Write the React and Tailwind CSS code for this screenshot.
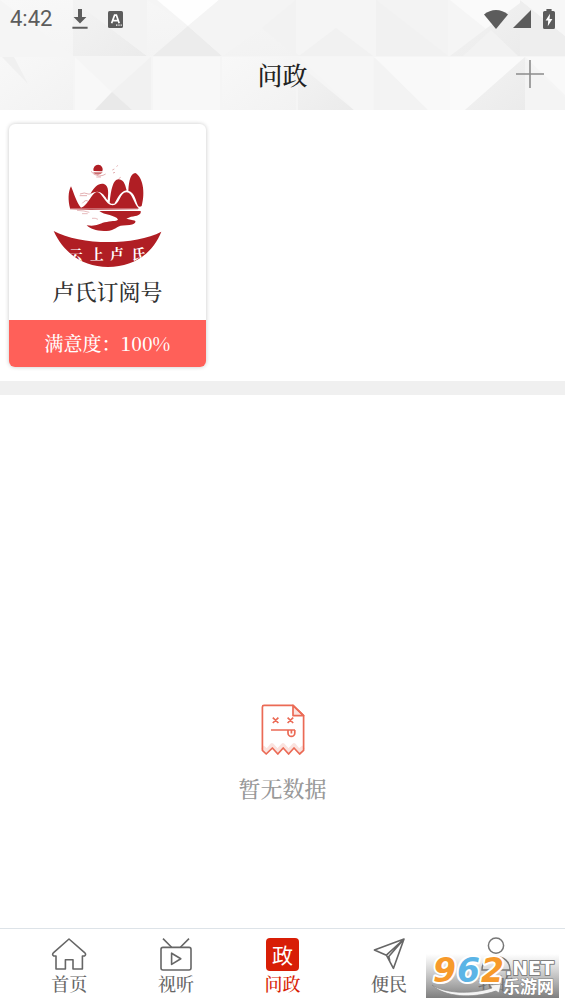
import React, { useState } from 'react';

const tabs = [
  { id: 'home', label: '首页', Icon: HomeIcon },
  { id: 'video', label: '视听', Icon: TvIcon },
  { id: 'politics', label: '问政', Icon: PoliticsIcon },
  { id: 'service', label: '便民', Icon: PlaneIcon },
  { id: 'mine', label: '我的', Icon: UserIcon },
];

function HomeIcon() {
  return (
    <svg viewBox="0 0 36 34" className="h-[34px] w-9" fill="none" stroke="#666" strokeWidth="1.6" strokeLinejoin="round">
      <path d="M18 2 L33.6 15.6 Q35.6 17.4 33.6 19 L31.4 19 V32 H22 V22.8 H14.4 V32 H5 V19 L2.6 19 Q.6 17.4 2.6 15.6 Z" />
    </svg>
  );
}

function TvIcon() {
  return (
    <svg viewBox="0 0 36 34" className="h-[34px] w-9" fill="none" stroke="#666" strokeWidth="1.6" strokeLinejoin="round">
      <path d="M5 1.6 L13.6 10.2 M31 1.6 L22.4 10.2" />
      <rect x="3" y="10.4" width="30" height="22.6" rx="2" />
      <path d="M13.6 16.2 V27.4 L22.8 21.8 Z" />
    </svg>
  );
}

function PoliticsIcon() {
  return (
    <span className="flex h-[33px] w-[33px] items-center justify-center rounded bg-[#d81e06] font-['Noto_Sans_CJK_SC',sans-serif] text-[21px] leading-none font-normal text-white">
      政
    </span>
  );
}

function PlaneIcon() {
  return (
    <svg viewBox="0 0 36 34" className="h-[34px] w-9" fill="none" stroke="#666" strokeWidth="1.6" strokeLinejoin="round">
      <path d="M33 2 L3.4 13 L15.4 18.2 L22.4 31.4 Z M33 2 L15.4 18.2 M33 2 L17.8 19.6 L18.8 23.8" />
    </svg>
  );
}

function UserIcon() {
  return (
    <svg viewBox="0 0 36 34" className="h-[34px] w-9" fill="none" stroke="#777" strokeWidth="1.5">
      <circle cx="18" cy="8.6" r="7.6" />
      <path d="M4 33 C4 15 32 15 32 33 Z" />
    </svg>
  );
}

// Low-poly pattern behind the status bar and the title
function HeaderPattern() {
  return (
    <svg viewBox="0 0 565 110" preserveAspectRatio="none" className="absolute inset-0 h-full w-full" aria-hidden="true">
      <defs>
        <linearGradient id="facet" x1="0" y1="0" x2="1" y2="1">
          <stop offset="0" stopColor="#f8f8f8" />
          <stop offset="1" stopColor="#f2f2f2" />
        </linearGradient>
        <linearGradient id="facetDark" x1="0" y1="0" x2="1" y2="1">
          <stop offset="0" stopColor="#f3f3f3" />
          <stop offset="1" stopColor="#ebebeb" />
        </linearGradient>
      </defs>
      <rect width="565" height="110" fill="#f5f5f5" />
      <path d="M0 0 H73 V56 Z M147 0 L188 26 L153 56 H147 Z M222 56 L262 28 L300 56 Z" fill="url(#facet)" />
      <path d="M73 0 L147 56 H73 Z" fill="url(#facetDark)" />
      <path d="M73 0 H147 V56 Z" fill="#f3f3f3" />
      <path d="M157 0 H219 L188 26 Z" fill="#fefefe" />
      <path d="M188 26 L222 56 H153 Z" fill="#ececec" />
      <path d="M219 0 H296 V56 L262 28 L222 56 L188 26 Z" fill="#f4f4f4" />
      <path d="M262 28 L296 0 V56 Z" fill="#f2f2f2" />
      <path d="M299 56 L336 28 L373 56 Z" fill="#f1f1f1" />
      <path d="M376 0 H448 V56 H376 Z" fill="#f3f3f3" />
      <path d="M376 0 L448 56 H376 Z" fill="#f1f1f1" />
      <path d="M450 0 L491 33 L525 0 Z" fill="#fafafa" />
      <path d="M450 56 L520 3 V56 Z" fill="url(#facetDark)" />
      <path d="M491 30 L518 56 H463 Z" fill="#f2f2f2" />
      <path d="M520 0 L565 36 V56 H520 Z" fill="#eee" />
      <path d="M520 0 H565 V36 Z" fill="#f7f7f7" />
      <path d="M0 57 H73 V110 H0 Z" fill="url(#facet)" />
      <path d="M2 57 L28 84 L14 57 Z" fill="#f0f0f0" />
      <path d="M75 57 L112 92 L151 57 Z" fill="#f5f5f5" />
      <path d="M75 57 L112 92 L95 110 H75 Z" fill="#f8f8f8" />
      <path d="M112 92 L151 57 V110 H132 Z" fill="#f1f1f1" />
      <path d="M112 92 L132 110 H95 Z" fill="#e9e9e9" />
      <path d="M153 57 H220 V110 H153 Z" fill="#f8f8f8" />
      <path d="M222 57 H296 V110 H222 Z" fill="url(#facet)" />
      <path d="M298 64 L354 110 H298 Z" fill="url(#facetDark)" />
      <path d="M298 57 H373 V110 H354 Z" fill="#f6f6f6" />
      <path d="M374 57 L428 110 H374 Z" fill="#f3f3f3" />
      <path d="M374 57 H450 V110 H428 Z" fill="#f9f9f9" />
      <path d="M450 57 H525 L465 110 H450 Z" fill="#fafafa" />
      <path d="M465 110 L525 57 V110 Z" fill="url(#facetDark)" />
      <path d="M525 57 H565 V95 Z" fill="#f9f9f9" />
      <path d="M525 62 L565 98 V110 H525 Z" fill="#f4f4f4" />
    </svg>
  );
}

function StatusBar() {
  return (
    <div className="relative flex h-[38px] items-center justify-between px-[10px] text-[#5c5c5c]">
      <div className="flex items-center">
        <span className="font-[Roboto,sans-serif] text-[22px] leading-none">4:42</span>
        <svg viewBox="0 0 16 22" className="ml-5 h-[22px] w-4" fill="currentColor">
          <path d="M6 1 H10 V9 H14.4 L8 15.4 L1.6 9 H6 Z M.4 18.8 H15.6 V20.8 H.4 Z" />
        </svg>
        <svg viewBox="0 0 15 17" className="ml-5 h-[17px] w-[15px]">
          <rect width="15" height="17" rx="1.6" fill="currentColor" />
          <path d="M3.6 12.2 L6.6 4.2 H8.4 L11.2 12.2 M4.8 9.6 H10" fill="none" stroke="#fff" strokeWidth="1.7" />
          <path d="M8 14.2 H9.4 M10.4 14.2 H11.6 M12.6 14.2 H13.8" stroke="#fff" strokeWidth="1.2" />
        </svg>
      </div>
      <div className="flex items-center">
        <svg viewBox="0 0 24 19" className="h-[19px] w-6" fill="currentColor">
          <path d="M12 19 L0 4.6 C7 -1.4 17 -1.4 24 4.6 Z" />
        </svg>
        <svg viewBox="0 0 18 18" className="ml-[5px] h-[18px] w-[18px]" fill="currentColor">
          <path d="M18 0 V18 H0 Z" />
        </svg>
        <svg viewBox="0 0 12 20" className="ml-3 h-5 w-3">
          <path d="M3.4 0 H8.6 V2 H10.4 Q12 2 12 3.6 V18.4 Q12 20 10.4 20 H1.6 Q0 20 0 18.4 V3.6 Q0 2 1.6 2 H3.4 Z" fill="currentColor" />
          <path d="M7 4.8 L2.6 11.6 H5.2 L4.8 17.2 L9.4 10 H6.6 Z" fill="#fff" />
        </svg>
      </div>
    </div>
  );
}

function AccountLogo() {
  return (
    <svg viewBox="24 24 327 312" className="h-[104px] w-[109px]" fill="#b01e24">
      <defs>
        <clipPath id="bowl">
          <path d="M26 228 C105 272 270 272 349 230 C325 292 268 336 189 336 C112 336 55 292 26 228 Z" />
        </clipPath>
      </defs>
      <path d="M146 48 A14 14 0 1 1 172 49 Z" />
      <path d="M144 52 H173 Q168 59 159 59 Q148 59 144 52 Z" opacity=".65" />
      <g fill="none" stroke="#b01e24" strokeWidth="1.5" opacity=".7">
        <path d="M138 49 Q145 60 162 63 Q176 62 182 57 M154 66 H168 M202 45 L208 42 M204 54 L210 52 M215 35 L218 31 M221 71 L227 67" />
        <path d="M105 117 Q118 111 130 117 H136 M104 122 H126 M112 145 Q123 131 130 140 M118 153 L130 143" />
      </g>
      <path d="M75 160 C69 136 69 111 78 94 C87 115 94 142 108 158 C126 154 136 124 149 114 C168 98 178 150 203 151 C224 151 225 112 244 112 C262 111 265 145 281 160 Z" />
      <path d="M136 117 C148 96 161 83 177 87 C193 93 190 116 188 136 C177 119 165 99 136 117 Z" />
      <path d="M194 143 C198 102 205 72 221 73 C240 76 241 94 245 106 C222 110 216 136 208 146 Q200 148 194 143 Z" />
      <path d="M250 107 C252 75 257 56 271 54 C293 65 302 112 290 153 Q285 157 280 154 C272 138 270 112 250 107 Z" />
      <path d="M75 160 H281 L279 163 L138 165 L75 163 Z" opacity=".75" />
      <path d="M163 168 H287 C290 180 276 183 258 185 L244 191 L264 196 C278 196 273 211 244 211 C214 211 218 222 193 227 C161 231 137 223 125 211 C153 215 159 208 179 202 C197 197 214 199 219 194 C214 180 176 180 163 168 Z" />
      <path d="M96 166 Q118 167 133 172 M111 176 H128 M141 190 Q151 188 159 193" fill="none" stroke="#b01e24" strokeWidth="1.5" opacity=".6" />
      <path d="M26 228 C105 272 270 272 349 230 C325 292 268 336 189 336 C112 336 55 292 26 228 Z" />
      <g clipPath="url(#bowl)" fill="#fff" fontFamily="'Noto Serif CJK SC','Noto Sans CJK SC',serif" fontSize="41" fontWeight="700">
        <text x="72" y="314">云</text>
        <text x="135" y="313">上</text>
        <text x="195" y="313">卢</text>
        <text x="260" y="313">氏</text>
      </g>
    </svg>
  );
}

function AccountCard({ name, satisfaction }) {
  return (
    <a href="#account" className="block w-[36%] overflow-hidden rounded-md bg-white shadow-[0_0_4px_rgba(0,0,0,0.22)]">
      <div className="flex h-[196px] flex-col items-center pt-[39px]">
        <AccountLogo />
        <h2 className="mt-2 text-[22px] leading-8 font-medium text-[#333]">{name}</h2>
      </div>
      <p className="flex h-[47px] items-center justify-center bg-[#ff6059] text-[19px] font-medium text-white">
        满意度：<span>{satisfaction}%</span>
      </p>
    </a>
  );
}

function EmptyState() {
  return (
    <section className="flex flex-1 flex-col items-center pt-[309px]">
      <svg viewBox="0 0 44 52" className="h-[52px] w-11" fill="none" stroke="#eb6a55" strokeWidth="1.7" strokeLinejoin="round">
        <path d="M1.4 43 L6 47 L11 41 L16.5 47 L22 41 L27.5 47 L33 41 L38 47 L42.6 43" stroke="#fae3df" strokeWidth="4" />
        <path d="M32 1.4 L42.6 11.6 H32 Z" fill="#fae3df" />
        <path d="M32 1.4 H3 Q1.4 1.4 1.4 3 V46.4 L5.2 50 L11.4 44 L16.8 50 L22.2 44 L27.6 50 L33 44 L38.6 50 L42.6 46.4 V11.6 Z" />
        <path d="M11.8 13.6 L17.4 19 M17.4 13.6 L11.8 19 M26.6 13.6 L32.2 19 M32.2 13.6 L26.6 19" />
        <path d="M10 26 H34 M27 26 V29 A3.4 3.4 0 0 0 33.8 29 V26 M30.4 26 V29.4" />
      </svg>
      <p className="mt-4 text-[22px] leading-8 font-medium text-[#999]">暂无数据</p>
    </section>
  );
}

function TabBar({ active, onChange }) {
  return (
    <nav className="flex h-[76px] border-t border-[#dde3e8] bg-white px-4 pt-2">
      {tabs.map(({ id, label, Icon }) => (
        <button
          key={id}
          type="button"
          onClick={() => onChange(id)}
          className={`flex flex-1 flex-col items-center text-[18px] leading-6 font-medium ${active === id ? 'text-[#d81e06]' : 'text-[#666]'}`}
        >
          <span className="flex h-[34px] items-center">
            <Icon />
          </span>
          {label}
        </button>
      ))}
    </nav>
  );
}

function SiteBadge() {
  return (
    <svg viewBox="0 0 133 48" className="pointer-events-none absolute right-[6px] bottom-[6px] h-12 w-[133px]">
      <defs>
        <linearGradient id="badgeShade" x1="0" y1="0" x2="0" y2="1">
          <stop offset="0" stopColor="#888" stopOpacity="0" />
          <stop offset="1" stopColor="#707070" stopOpacity=".9" />
        </linearGradient>
      </defs>
      <rect y="4" width="133" height="44" fill="url(#badgeShade)" />
      <path d="M6 35 C18 43 44 45 66 38 L64 35 L75 34 L73 43 L70 41 C46 49 18 47 6 35 Z" fill="#f4f4f4" stroke="#888" strokeWidth=".7" />
      <g fontFamily="'DejaVu Sans',sans-serif" fontWeight="700" paintOrder="stroke" strokeLinejoin="round">
        <g fontSize="33" fontStyle="italic" stroke="#fff" strokeWidth="4">
          <text x="7" y="32" fill="#f79a2b">9</text>
          <text x="31" y="32" fill="#5bb4e6">6</text>
          <text x="55" y="32" fill="#f79a2b">2</text>
        </g>
        <text x="79" y="25" fontSize="19" fill="#fff" stroke="#808080" strokeWidth="2">.NET</text>
      </g>
      <text x="77" y="43" fontSize="17" fontWeight="700" fontFamily="'Noto Sans CJK SC',sans-serif" fill="#fff" stroke="#808080" strokeWidth="1" paintOrder="stroke">乐游网</text>
    </svg>
  );
}

export default function App() {
  const [activeTab, setActiveTab] = useState('politics');

  return (
    <div className="relative flex min-h-screen flex-col bg-white font-['Noto_Serif_CJK_SC','Noto_Serif_SC','Liberation_Serif','Noto_Sans_CJK_SC',serif]">
      <header className="relative h-[110px]">
        <HeaderPattern />
        <StatusBar />
        <div className="relative flex h-[72px] items-center justify-center">
          <h1 className="text-[25px] leading-9 font-medium text-[#222]">问政</h1>
          <button type="button" aria-label="添加" className="absolute right-[21px]">
            <svg viewBox="0 0 28 28" className="h-7 w-7" stroke="#8c8c8c" strokeWidth="1.6">
              <path d="M14 0 V28 M0 14 H28" />
            </svg>
          </button>
        </div>
      </header>

      <main className="flex flex-1 flex-col">
        <section className="border-b-[14px] border-[#f0f0f0] px-[9px] py-[14px]">
          <AccountCard name="卢氏订阅号" satisfaction={100} />
        </section>
        <EmptyState />
      </main>

      <TabBar active={activeTab} onChange={setActiveTab} />
      <SiteBadge />
    </div>
  );
}
